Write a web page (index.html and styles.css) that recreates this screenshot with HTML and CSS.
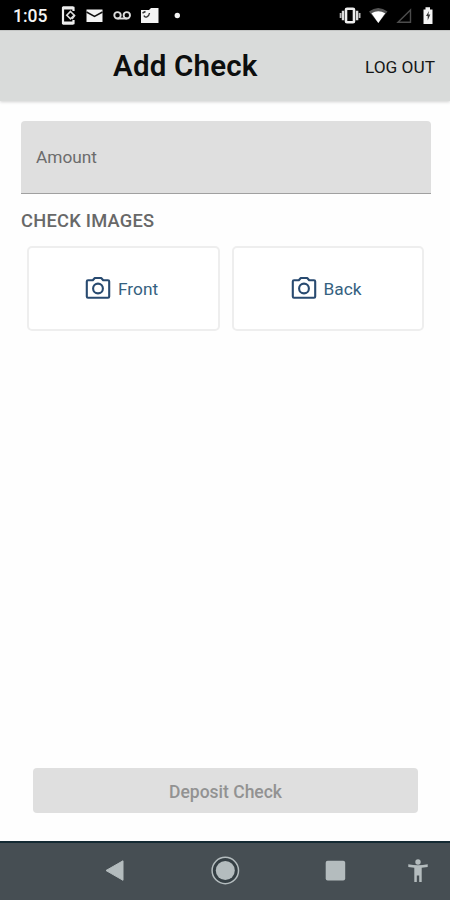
FILE: index.html
```html
<!DOCTYPE html>
<html lang="en">
<head>
<meta charset="utf-8">
<title>Add Check</title>
<link rel="stylesheet" href="styles.css">
</head>
<body>
<div class="status">
  <span class="time">1:05</span>
  <svg class="status-left" width="122" height="30" viewBox="60 0 122 30">
    <path d="M73.500 11V7.500H63v16h10.500V20" fill="none" stroke="#eee" stroke-width="2.200" stroke-linejoin="round"/>
    <path d="M63 8h10M63 23h10" stroke="#eee" stroke-width="2.800"/>
    <path d="M70.500 11.500l3.700 3.700-3.700 3.700-3.700-3.700z" fill="none" stroke="#ddd" stroke-width="1.600"/>
    <path d="M72 19l3-4" stroke="#ddd" stroke-width="1.500"/>
    <path d="M86.500 9.500h16V22h-16z" fill="#f4f4f4"/>
    <path d="M86.500 12l8 4.300 8-4.300" fill="none" stroke="#111" stroke-width="1.500"/>
    <g fill="none" stroke="#ddd" stroke-width="1.900"><circle cx="117.500" cy="15.300" r="3.200"/><circle cx="126.800" cy="15.300" r="3.200"/><path d="M117.500 18.500h9.300"/></g>
    <path d="M141 10h8l2-2h7.500v15H141z" fill="#f4f4f4"/>
    <path d="M144 15.500c1 3 5 1.500 5.500-2.500M142.500 13l3-1.500" fill="none" stroke="#333" stroke-width="1.400"/>
    <circle cx="177.300" cy="15.500" r="2.700" fill="#f4f4f4"/>
  </svg>
  <svg class="status-right" width="98" height="30" viewBox="338 0 98 30">
    <rect x="346" y="8.800" width="8" height="13.500" rx="1" fill="none" stroke="#eee" stroke-width="2.600"/>
    <path d="M343 10.800v9.400M357.100 10.800v9.400" stroke="#ddd" stroke-width="2.400"/>
    <path d="M340.600 13v5M359.600 13v5" stroke="#bbb" stroke-width="1.800"/>
    <path d="M369 11.500Q378.300 4.500 387.500 11.500L378.300 23z" fill="#555"/>
    <path d="M371.500 13.200Q378.300 9.500 385.200 13.200L378.300 23z" fill="#fff"/>
    <path d="M398 22.200L410.500 10v12.200z" fill="none" stroke="#4c4c4c" stroke-width="1.400"/>
    <path d="M423.500 9.500h2V7.300h4.500v2.200h2.500v14.500h-9z" fill="#f4f4f4"/>
    <path d="M429 11l-3 5h1.700v4.500l2.600-6h-1.900z" fill="#333"/>
  </svg>
</div>
<header class="header">
  <h1>Add Check</h1>
  <span class="logout">LOG OUT</span>
</header>
<main class="main">
  <div class="field"><span>Amount</span></div>
  <h2>CHECK IMAGES</h2>
  <div class="images">
    <div class="card">
      <svg class="camera" width="26" height="24" viewBox="0 0 26 24"><path d="M3 4.300h4.800L9.800 2h6.400l2 2.300H23q1.200 0 1.200 1.200v15q0 1.200-1.200 1.200H3q-1.200 0-1.200-1.200v-15q0-1.200 1.200-1.200z"/><circle cx="13" cy="12.500" r="4.900"/></svg>
      <span class="label">Front</span>
    </div>
    <div class="card">
      <svg class="camera" width="26" height="24" viewBox="0 0 26 24"><path d="M3 4.300h4.800L9.800 2h6.400l2 2.300H23q1.200 0 1.200 1.200v15q0 1.200-1.200 1.200H3q-1.200 0-1.200-1.200v-15q0-1.200 1.200-1.200z"/><circle cx="13" cy="12.500" r="4.900"/></svg>
      <span class="label">Back</span>
    </div>
  </div>
  <div class="deposit"><span>Deposit Check</span></div>
</main>
<nav class="nav">
  <svg width="450" height="59" viewBox="0 841 450 59">
    <path d="M106 870.500L123 860.800v19.500z" fill="#b4bcbe" stroke="#b4bcbe" stroke-linejoin="round"/>
    <circle cx="225.300" cy="870.500" r="13.200" fill="#353f44" stroke="#b4bcbe" stroke-width="1.500"/>
    <circle cx="225.300" cy="870.500" r="9.500" fill="#b4bcbe"/>
    <rect x="325.700" y="860.700" width="19.500" height="19.800" rx="2" fill="#b4bcbe"/>
    <circle cx="418" cy="862" r="2.700" fill="#b4bcbe"/>
    <path d="M408.300 864.200q9.700 2 19.400 0v2.700l-6 .8V882h-2.500v-6.500h-2.400V882h-2.500v-14.300l-6-.8z" fill="#b4bcbe"/>
  </svg>
</nav>
</body>
</html>
```
FILE: styles.css
```css
* { box-sizing: border-box; }
body {
  margin: 0;
  width: 450px;
  height: 900px;
  display: flex;
  flex-direction: column;
  background: #fefefe;
  font-family: Roboto, sans-serif;
  overflow: hidden;
}
svg { display: block; flex: none; }
.status {
  height: 30px;
  background: #000;
  display: flex;
  align-items: center;
  padding: 0 14px 0 13px;
}
.time {
  width: 47px;
  padding-top: 2px;
  color: #f4f4f4;
  font-size: 17.5px;
  font-weight: 500;
}
.status-right { margin-left: auto; }
.header {
  height: 71px;
  flex: none;
  background: #d9dbda;
  border-top: 1px solid #c4c6c5;
  box-shadow: 0 1px 3px rgba(0, 0, 0, 0.18);
  display: grid;
  grid-template-columns: 113px 1fr auto;
  align-items: center;
  padding: 0 15px 0 0;
}
h1 {
  grid-column: 2;
  margin: 0;
  color: #0c0e0e;
  font-size: 29.5px;
  font-weight: 600;
  line-height: 34px;
  letter-spacing: 0.2px;
}
.logout {
  color: #151717;
  font-size: 17.3px;
  padding-top: 1px;
}
.main {
  flex: 1;
  display: flex;
  flex-direction: column;
  padding: 20px 19px 28px 20px;
}
.field {
  height: 73px;
  margin-left: 1px;
  background: #dfdfdf;
  border-bottom: 1.5px solid #a0a0a0;
  border-radius: 4px 4px 0 0;
  display: flex;
  align-items: center;
  padding-left: 15px;
  color: #6c6c6c;
  font-size: 17.3px;
}
h2 {
  margin: 15px 0 0 1px;
  color: #686868;
  font-size: 18.3px;
  line-height: 23px;
  font-weight: 500;
  letter-spacing: 0.25px;
}
.images {
  display: grid;
  grid-template-columns: 1fr 1fr;
  gap: 12px;
  margin: 14px 7px 0 7px;
}
.card {
  height: 85px;
  border: 2px solid #eeeeee;
  border-radius: 5px;
  background: #fff;
  display: flex;
  align-items: center;
  padding-left: 56px;
}
.card + .card { padding-left: 57px; }
.camera {
  margin: 0 7px 2px 0;
  fill: none;
  stroke: #284a70;
  stroke-width: 2.1;
  stroke-linejoin: round;
}
.label {
  color: #35617f;
  font-size: 17.3px;
}
.deposit {
  height: 45px;
  margin: auto 13px 0 13px;
  background: #dfdfdf;
  border-radius: 4px;
  display: flex;
  align-items: center;
  justify-content: center;
  padding-top: 2px;
  color: #929292;
  font-size: 17.5px;
  font-weight: 500;
}
.nav {
  height: 59px;
  flex: none;
  background: #464e53;
  border-top: 2px solid #142a33;
}
.nav svg { margin-top: -2px; }
```
